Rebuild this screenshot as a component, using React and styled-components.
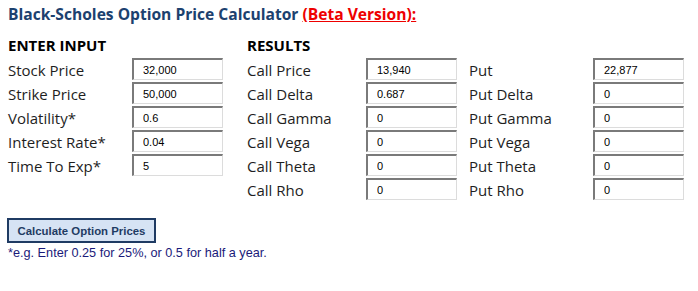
import React from 'react';
import styled, { createGlobalStyle } from 'styled-components';

const GlobalStyle = createGlobalStyle`
  body {
    margin: 0;
    background: #ffffff;
    font-family: 'Open Sans', sans-serif;
  }
`;

const Page = styled.div`
  width: 698px;
  height: 291px;
  padding: 3px 0 0 8px;
  box-sizing: border-box;
`;

const Title = styled.h1`
  margin: 0;
  font-size: 15.6px;
  line-height: 22px;
  font-weight: 700;
  color: #1c416f;
`;

const Beta = styled.span`
  color: #ee0000;
  text-decoration: underline;
`;

const Grid = styled.div`
  display: grid;
  grid-template-columns: 124px 115px 119px 103px 124px 91px;
  grid-auto-rows: 24px;
  margin-top: 8px;
  align-items: center;
`;

const Heading = styled.div`
  grid-column: ${p => p.$col} / span 2;
  grid-row: 1;
  font-size: 15px;
  font-weight: 700;
  color: #000;
  align-self: center;
`;

const Label = styled.div`
  grid-column: ${p => p.$col};
  grid-row: ${p => p.$row};
  font-size: 15px;
  color: #1e1e1e;
  line-height: 20px;
  padding-top: 2px;
`;

const Field = styled.input`
  grid-column: ${p => p.$col};
  grid-row: ${p => p.$row};
  width: 91px;
  height: 22px;
  box-sizing: border-box;
  margin: 0;
  padding: 0 0 0 9px;
  font-family: 'Liberation Sans', Arial, sans-serif;
  font-size: 11px;
  color: #000;
  background: #fff;
  border-style: solid;
  border-width: 2px 1px 1px 2px;
  border-color: #7a7a7a #dcdcdc #dcdcdc #7a7a7a;
  outline: none;
`;

const Button = styled.button`
  display: block;
  margin: 17px 0 0 -1px;
  width: 149px;
  height: 25px;
  padding: 0;
  background: #d6e3f4;
  border: 2px solid #1f3b63;
  color: #1f3b63;
  font-family: 'Liberation Sans', Arial, sans-serif;
  font-size: 11.4px;
  font-weight: 700;
  cursor: pointer;
`;

const Note = styled.p`
  margin: 2px 0 0;
  font-family: 'Liberation Sans', Arial, sans-serif;
  font-size: 12.7px;
  line-height: 16px;
  color: #1a1a7a;
`;

const inputs = [
  ['Stock Price', '32,000'],
  ['Strike Price', '50,000'],
  ['Volatility*', '0.6'],
  ['Interest Rate*', '0.04'],
  ['Time To Exp*', '5'],
];

const calls = [
  ['Call Price', '13,940'],
  ['Call Delta', '0.687'],
  ['Call Gamma', '0'],
  ['Call Vega', '0'],
  ['Call Theta', '0'],
  ['Call Rho', '0'],
];

const puts = [
  ['Put', '22,877'],
  ['Put Delta', '0'],
  ['Put Gamma', '0'],
  ['Put Vega', '0'],
  ['Put Theta', '0'],
  ['Put Rho', '0'],
];

const Column = ({ rows, col }) =>
  rows.map(([label, value], i) => (
    <React.Fragment key={label}>
      <Label $col={col} $row={i + 2}>{label}</Label>
      <Field $col={col + 1} $row={i + 2} defaultValue={value} readOnly />
    </React.Fragment>
  ));

export default function App() {
  return (
    <>
      <GlobalStyle />
      <Page>
        <Title>
          Black-Scholes Option Price Calculator <Beta>(Beta Version):</Beta>
        </Title>
        <Grid>
          <Heading $col={1}>ENTER INPUT</Heading>
          <Heading $col={3}>RESULTS</Heading>
          <Column rows={inputs} col={1} />
          <Column rows={calls} col={3} />
          <Column rows={puts} col={5} />
        </Grid>
        <Button>Calculate Option Prices</Button>
        <Note>*e.g. Enter 0.25 for 25%, or 0.5 for half a year.</Note>
      </Page>
    </>
  );
}
